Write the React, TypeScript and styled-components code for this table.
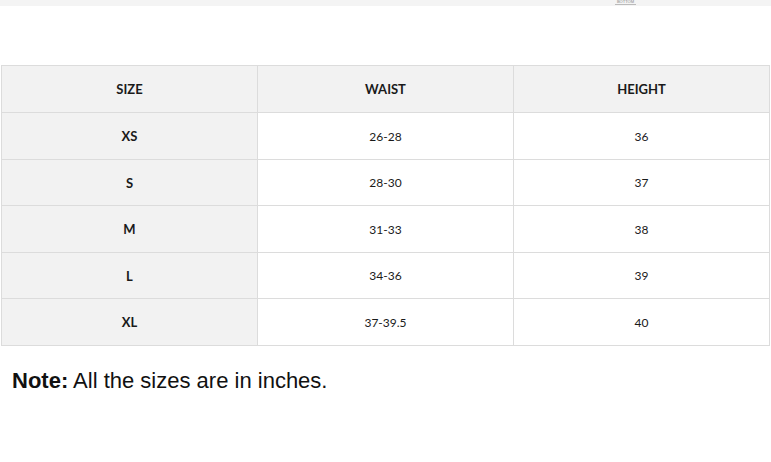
import React from "react";
import styled, { createGlobalStyle } from "styled-components";

const Global = createGlobalStyle`
  html, body { margin: 0; padding: 0; background: #fff; }
  body { width: 771px; height: 462px; overflow: hidden; }
`;

const Page = styled.div`
  display: flex;
  flex-direction: column;
  width: 771px;
`;

const TopStrip = styled.div`
  height: 6px;
  background: #f4f4f4;
  display: flex;
  justify-content: flex-end;
  padding-right: 135px;
`;

const StripMark = styled.span`
  font-family: "Liberation Sans", sans-serif;
  font-size: 4px;
  line-height: 4px;
  color: #888;
  border-bottom: 1px solid #bbb;
  height: 4px;
  padding: 0 2px;
`;

const TableWrap = styled.div`
  padding: 59px 1px 0 1px;
`;

const Table = styled.table`
  width: 769px;
  border-collapse: collapse;
  table-layout: fixed;
  font-family: "Lato", "Open Sans", sans-serif;
  color: #1a1a1a;
`;

const Th = styled.th`
  height: 46px;
  padding: 0;
  background: #f2f2f2;
  border: 1px solid #dcdcdc;
  font-size: 13px;
  font-weight: 700;
  text-align: center;
  vertical-align: middle;
`;

const Td = styled.td<{ $head?: boolean; $h: number }>`
  height: ${(p) => p.$h}px;
  padding: 0;
  border: 1px solid #dcdcdc;
  background: ${(p) => (p.$head ? "#f2f2f2" : "#fff")};
  font-size: ${(p) => (p.$head ? "13px" : "12px")};
  font-weight: ${(p) => (p.$head ? 700 : 400)};
  text-align: center;
  vertical-align: middle;
`;

const Note = styled.p`
  margin: 22px 0 0 12px;
  font-family: "Liberation Sans", Arial, sans-serif;
  font-size: 22px;
  color: #111;
`;

const rows = [
  ["XS", "26-28", "36"],
  ["S", "28-30", "37"],
  ["M", "31-33", "38"],
  ["L", "34-36", "39"],
  ["XL", "37-39.5", "40"],
];

export default function App() {
  return (
    <Page>
      <Global />
      <TopStrip>
        <StripMark>BOTTOM</StripMark>
      </TopStrip>
      <TableWrap>
        <Table>
          <thead>
            <tr>
              <Th>SIZE</Th>
              <Th>WAIST</Th>
              <Th>HEIGHT</Th>
            </tr>
          </thead>
          <tbody>
            {rows.map((r, i) => {
              const h = i % 2 === 0 ? 46 : 45;
              return (
                <tr key={r[0]}>
                  <Td $head $h={h}>{r[0]}</Td>
                  <Td $h={h}>{r[1]}</Td>
                  <Td $h={h}>{r[2]}</Td>
                </tr>
              );
            })}
          </tbody>
        </Table>
      </TableWrap>
      <Note>
        <b>Note:</b> All the sizes are in inches.
      </Note>
    </Page>
  );
}
